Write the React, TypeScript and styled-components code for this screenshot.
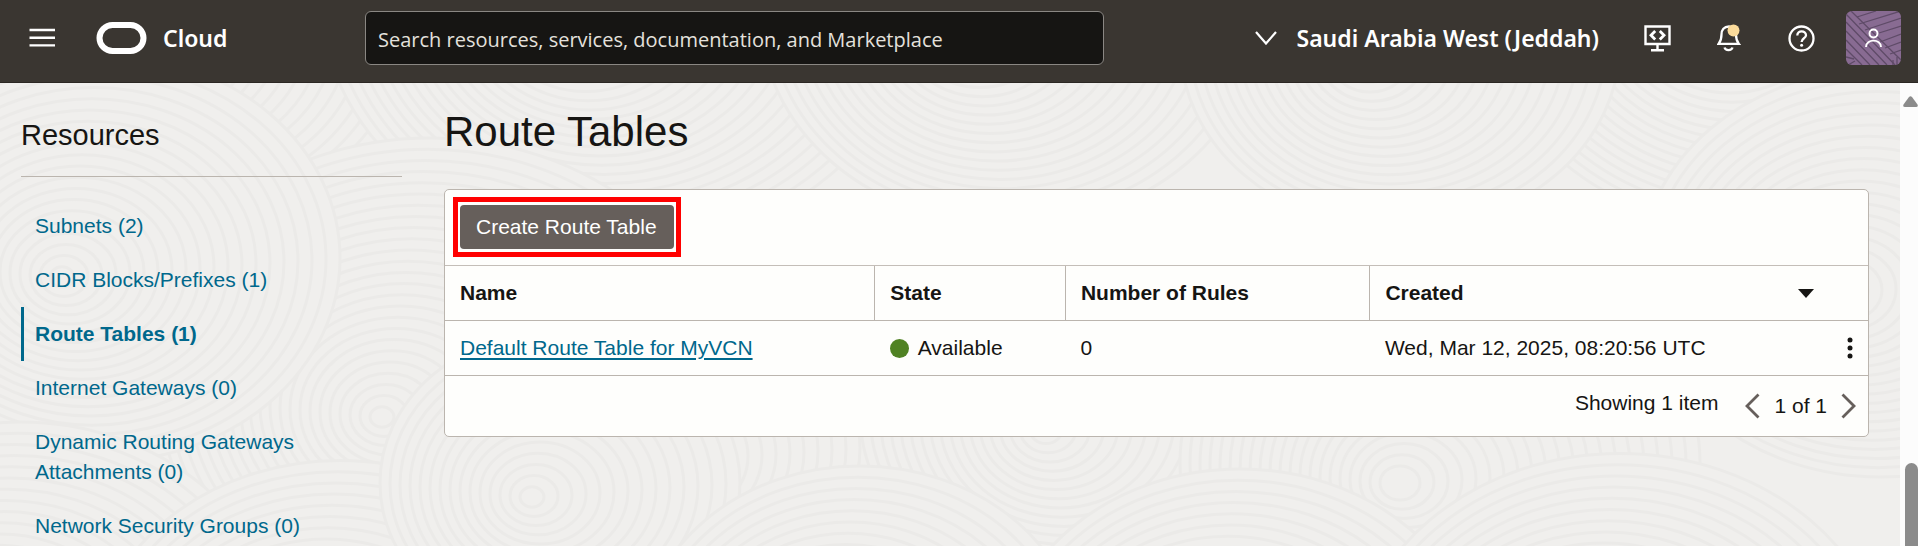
import React from "react";
import styled, { createGlobalStyle, css } from "styled-components";

const GlobalStyle = createGlobalStyle`
  *, *::before, *::after { box-sizing: border-box; }
  body {
    margin: 0;
    background: #f0efed;
    color: #161513;
    font-family: "Liberation Sans", Arial, sans-serif;
    font-size: 21px;
    line-height: 30px;
  }
`;

const Page = styled.div`
  display: flex;
  flex-direction: column;
  height: 100vh;
  overflow: hidden;
`;

const TopBar = styled.header`
  display: flex;
  align-items: center;
  flex: none;
  padding: 11px 17px 17px 29px;
  background: #3a3631;
  border-bottom: 1px solid #2b2723;
  color: #fff;
  font-family: "Noto Sans", "Open Sans", sans-serif;
`;

const IconButton = styled.button`
  display: flex;
  flex: none;
  padding: 0;
  border: 0;
  background: none;
  color: inherit;
  cursor: pointer;
`;

const ToolButton = styled(IconButton)`
  justify-content: center;
  width: 28px;
`;

const Brand = styled.a`
  display: flex;
  align-items: center;
  gap: 16px;
  width: 133px;
  margin-left: 40px;
  color: inherit;
  font-size: 23px;
  font-weight: 600;
  text-decoration: none;
`;

const SearchBox = styled.input`
  flex: 0 1 739px;
  min-width: 0;
  height: 54px;
  margin-left: 136px;
  padding: 2px 12px 0;
  border: 1px solid #8a8783;
  border-radius: 6px;
  background: #161513;
  color: #fff;
  font-family: "Open Sans", "Noto Sans", sans-serif;
  font-size: 20px;
  &::placeholder { color: #e4e1dd; opacity: 1; }
`;

const Tools = styled.div`
  display: flex;
  align-items: center;
  gap: 44px;
  margin-left: auto;
`;

const RegionButton = styled(IconButton)`
  align-items: center;
  gap: 20px;
  font: inherit;
  font-size: 23px;
  font-weight: 600;
  white-space: nowrap;
`;

const Avatar = styled(IconButton)`
  margin-left: -13px;
  border-radius: 6px;
  overflow: hidden;
`;

const Body = styled.div`
  position: relative;
  display: flex;
  flex: 1;
  min-height: 0;
`;

const Backdrop = styled.svg`
  position: absolute;
  inset: 0;
  width: 100%;
  height: 100%;
`;

const Sidebar = styled.nav`
  position: relative;
  flex: none;
  width: 402px;
  padding: 34px 0 0 21px;
`;

const SidebarTitle = styled.h2`
  margin: 0 0 22px;
  padding-bottom: 23px;
  border-bottom: 1px solid #bbb5ae;
  font-size: 29px;
  font-weight: 400;
  line-height: 36px;
`;

const NavList = styled.ul`
  margin: 0;
  padding: 0;
  list-style: none;
`;

const NavLink = styled.a<{ $active?: boolean }>`
  display: block;
  padding: 12px 70px 12px 11px;
  border-left: 3px solid transparent;
  color: #00688c;
  text-decoration: none;
  ${(p) => p.$active && css`
    border-color: #00688c;
    font-weight: 700;
  `}
`;

const Content = styled.main`
  position: relative;
  flex: 1;
  min-width: 0;
  padding: 25px 31px 0 42px;
`;

const Title = styled.h1`
  margin: 0 0 33px;
  font-size: 42px;
  font-weight: 400;
  line-height: 48px;
`;

const Panel = styled.section`
  border: 1px solid #bbb5ae;
  border-radius: 5px;
  background: #fefefc;
`;

const Toolbar = styled.div`
  display: flex;
  padding: 7px 8px 8px;
`;

const Highlight = styled.div`
  padding: 3px 2px;
  border: 5px solid #ff0000;
`;

const PrimaryButton = styled.button`
  height: 44px;
  padding: 0 17px 0 16px;
  border: 0;
  border-radius: 4px;
  background: #665f5b;
  color: #fff;
  font: inherit;
  cursor: pointer;
`;

const Table = styled.table`
  width: 100%;
  border-collapse: collapse;
  table-layout: fixed;
`;

const Column = styled.col<{ $width?: string }>`
  width: ${(p) => p.$width ?? "auto"};
`;

const HeadCell = styled.th`
  height: 55px;
  padding: 0 15px;
  border-top: 1px solid #c4beb8;
  border-bottom: 1px solid #bbb5ae;
  font-weight: 700;
  text-align: left;
  & + & { border-left: 1px solid #bbb5ae; }
`;

const SortHeader = styled.div`
  display: flex;
  align-items: center;
  justify-content: space-between;
  padding-right: 39px;
`;

const Cell = styled.td`
  height: 55px;
  padding: 0 15px;
  border-bottom: 1px solid #bbb5ae;
`;

const ActionCell = styled(Cell)`
  padding: 0 0 0 27px;
`;

const TableLink = styled.a`
  color: #00688c;
  text-decoration: underline;
  text-decoration-thickness: 2px;
  text-underline-offset: 3px;
`;

const Status = styled.span`
  display: flex;
  align-items: center;
  gap: 9px;
  &::before {
    content: "";
    width: 19px;
    height: 19px;
    border-radius: 50%;
    background: #508223;
  }
`;

const Footer = styled.footer`
  display: flex;
  justify-content: flex-end;
  gap: 27px;
  padding: 12px 12px;
`;

const Pager = styled.div`
  display: flex;
  align-items: center;
  gap: 14px;
  height: 36px;
  color: #161513;
`;

const ScrollTrack = styled.div`
  position: relative;
  display: flex;
  flex: none;
  flex-direction: column;
  align-items: flex-end;
  justify-content: space-between;
  width: 18px;
  padding-top: 13px;
  background: #fcfcfc;
`;

const ScrollThumb = styled.div`
  width: 13px;
  height: 83px;
  border-radius: 7px 7px 0 0;
  background: #8b8b8b;
`;

const links = [
  "Subnets (2)",
  "CIDR Blocks/Prefixes (1)",
  "Route Tables (1)",
  "Internet Gateways (0)",
  "Dynamic Routing Gateways Attachments (0)",
  "Network Security Groups (0)",
];

const swirls = [
  [180, -60, 240], [620, -90, 300], [1010, -70, 250], [1760, -90, 280], [1400, -40, 220],
  [1880, 190, 240], [430, 310, 300], [700, 360, 230], [1080, 330, 220], [1440, 380, 260],
  [100, 175, 240], [20, 560, 260], [340, 590, 250], [560, 400, 180], [860, 570, 220],
  [1240, 590, 240], [1620, 600, 270],
];

const Swirls = () => (
  <Backdrop aria-hidden="true">
    {swirls.map(([x, y, size]) => (
      <g key={`${x}-${y}`} fill="#f0efed" stroke="#ebeae8" strokeWidth="3">
        {Array.from({ length: Math.floor(size / 12) }, (_, i) => (
          <ellipse key={i} cx={x - i * 2} cy={y + i} rx={size - i * 12} ry={(size - i * 12) * 0.85} />
        ))}
      </g>
    ))}
  </Backdrop>
);

const MenuIcon = () => (
  <svg width="27" height="20" viewBox="0 0 27 20" stroke="currentColor" strokeWidth="2.4">
    <path d="M0.500 2H26M0.500 9.700H26M0.500 17.400H26" />
  </svg>
);

const Logo = () => (
  <svg width="51" height="32" viewBox="0 0 51 32" fill="none" stroke="currentColor" strokeWidth="6">
    <rect x="3.500" y="3" width="44" height="26" rx="13" />
  </svg>
);

const RegionChevron = () => (
  <svg width="22" height="14" viewBox="0 0 22 14" fill="none" stroke="currentColor" strokeWidth="2.200">
    <path d="M1 1L11 12.500L21 1" />
  </svg>
);

const DevToolsIcon = () => (
  <svg width="27" height="27" viewBox="0 0 27 27" fill="none" stroke="currentColor" strokeWidth="2.400">
    <path d="M1.500 1.500H25.500V19H1.500ZM13.500 19V25M7 25.300H20" />
    <path d="M11.200 6L7 10.200L11.200 14.400M15.800 6L20 10.200L15.800 14.400" strokeWidth="2.800" />
  </svg>
);

const BellIcon = () => (
  <svg width="24" height="28" viewBox="0 0 24 28" fill="none" stroke="currentColor" strokeWidth="2.300">
    <path d="M12 2.500C7 2.500 4.500 6 4.500 10.500C4.500 15.500 3.500 17.500 1.700 19.800H21.700C19.900 17.500 19 15.500 19 10.500C19 6 16.500 2.500 12 2.500Z" />
    <path d="M7.500 23.500C8.500 27 14.500 27 15.500 23.500" />
    <circle cx="16.500" cy="6.500" r="6" fill="#fbdb9a" stroke="none" />
  </svg>
);

const HelpIcon = () => (
  <svg width="27" height="27" viewBox="0 0 27 27" fill="none" stroke="currentColor" strokeWidth="2.300">
    <circle cx="13.500" cy="13.500" r="12" />
    <path d="M9.300 10.500C9.300 5 18 5 18 10.200C18 13.500 13.600 13 13.600 17" />
    <circle cx="13.600" cy="20.300" r="1.500" fill="currentColor" stroke="none" />
  </svg>
);

const AvatarIcon = () => (
  <svg width="55" height="54" viewBox="0 0 55 54" fill="none">
    <rect width="55" height="54" fill="#886b92" />
    <g stroke="#5f4b68" strokeWidth="1.300">
      <path d="M5 0L55 49M0 3L49 54M0 11L41 54M0 20L33 54M0 29L24 54M0 38L16 54M0 46L8 48M2 54L9 50" />
      <path d="M11 6L30 0M13 13L55 0M19 19L55 7M33 22L55 15M34 31L55 23M39 37L55 31M44 43L55 39" />
      <path d="M47 49V54M51 46V54" />
    </g>
    <g stroke="#fff" strokeWidth="1.900">
      <circle cx="27.500" cy="22.500" r="4" />
      <path d="M20 36C20 27.500 35 27.500 35 36" />
    </g>
  </svg>
);

const SortIcon = () => (
  <svg width="16" height="9" viewBox="0 0 16 9" fill="currentColor">
    <path d="M0 0H16L8 9Z" />
  </svg>
);

const DotsIcon = () => (
  <svg width="6" height="24" viewBox="0 0 6 24" fill="currentColor">
    <circle cx="3" cy="4" r="2.500" />
    <circle cx="3" cy="12" r="2.500" />
    <circle cx="3" cy="20" r="2.500" />
  </svg>
);

const PageArrow = ({ next }: { next?: boolean }) => (
  <svg width="15" height="26" viewBox="0 0 15 26" fill="none" stroke="#665f5b" strokeWidth="2.800">
    <path d={next ? "M1.500 1.500L13 13L1.500 24.500" : "M13.500 1.500L2 13L13.500 24.500"} />
  </svg>
);

const ScrollUp = () => (
  <svg width="15" height="11" viewBox="0 0 15 11" fill="#8b8b8b">
    <path d="M6 1Q7.500 -0.700 9 1L14.500 8.500Q15.500 11 13 11H2Q-0.500 11 0.500 8.500Z" />
  </svg>
);

export default function App() {
  return (
    <Page>
      <GlobalStyle />
      <TopBar>
        <IconButton aria-label="Navigation menu"><MenuIcon /></IconButton>
        <Brand href="#home"><Logo />Cloud</Brand>
        <SearchBox
          type="search"
          aria-label="Search"
          placeholder="Search resources, services, documentation, and Marketplace"
        />
        <Tools>
          <RegionButton><RegionChevron />Saudi Arabia West (Jeddah)</RegionButton>
          <ToolButton aria-label="Developer tools"><DevToolsIcon /></ToolButton>
          <ToolButton aria-label="Notifications"><BellIcon /></ToolButton>
          <ToolButton aria-label="Help"><HelpIcon /></ToolButton>
          <Avatar aria-label="Profile"><AvatarIcon /></Avatar>
        </Tools>
      </TopBar>
      <Body>
        <Swirls />
        <Sidebar aria-label="Resources">
          <SidebarTitle>Resources</SidebarTitle>
          <NavList>
            {links.map((label, i) => (
              <li key={label}>
                <NavLink href="#resource" $active={i === 2}>{label}</NavLink>
              </li>
            ))}
          </NavList>
        </Sidebar>
        <Content>
          <Title>Route Tables</Title>
          <Panel>
            <Toolbar>
              <Highlight><PrimaryButton>Create Route Table</PrimaryButton></Highlight>
            </Toolbar>
            <Table>
              <colgroup>
                <Column $width="30.2%" />
                <Column $width="13.4%" />
                <Column $width="21.4%" />
                <Column />
                <Column $width="48px" />
              </colgroup>
              <thead>
                <tr>
                  <HeadCell>Name</HeadCell>
                  <HeadCell>State</HeadCell>
                  <HeadCell>Number of Rules</HeadCell>
                  <HeadCell colSpan={2}>
                    <SortHeader>Created<SortIcon /></SortHeader>
                  </HeadCell>
                </tr>
              </thead>
              <tbody>
                <tr>
                  <Cell><TableLink href="#route-table">Default Route Table for MyVCN</TableLink></Cell>
                  <Cell><Status>Available</Status></Cell>
                  <Cell>0</Cell>
                  <Cell>Wed, Mar 12, 2025, 08:20:56 UTC</Cell>
                  <ActionCell><IconButton aria-label="Actions"><DotsIcon /></IconButton></ActionCell>
                </tr>
              </tbody>
            </Table>
            <Footer>
              <span>Showing 1 item</span>
              <Pager>
                <IconButton aria-label="Previous page"><PageArrow /></IconButton>
                <span>1 of 1</span>
                <IconButton aria-label="Next page"><PageArrow next /></IconButton>
              </Pager>
            </Footer>
          </Panel>
        </Content>
        <ScrollTrack aria-hidden="true">
          <ScrollUp />
          <ScrollThumb />
        </ScrollTrack>
      </Body>
    </Page>
  );
}
